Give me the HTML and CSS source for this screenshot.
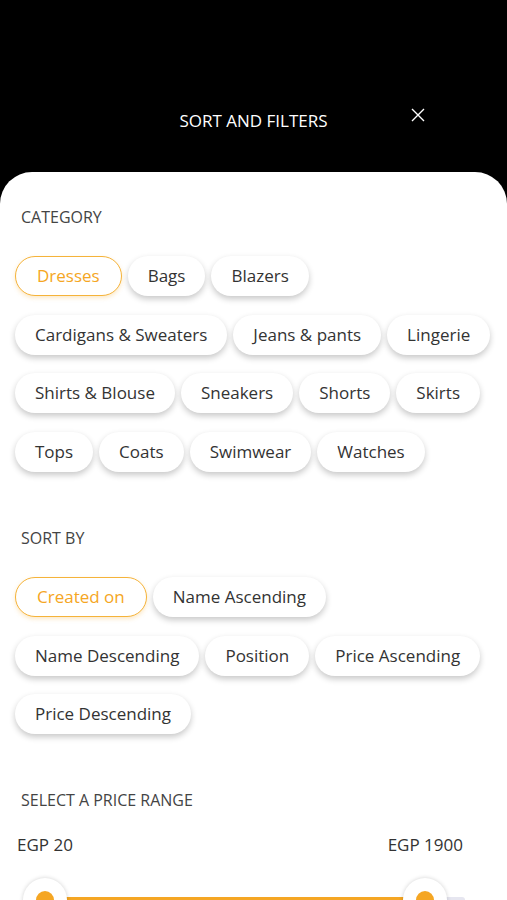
FILE: index.html
```html
<!DOCTYPE html>
<html>
<head>
    <title>Sort and Filters</title>
    <link rel="stylesheet" href="styles.css">
</head>
<body>
    <div class="topbar">
        <div class="title">SORT AND FILTERS</div>
        <svg class="close" width="14" height="14" viewBox="0 0 14 14">
            <path d="M1 1 L13 13 M13 1 L1 13" stroke="#fff" stroke-width="1.4" fill="none"/>
        </svg>
    </div>

    <div class="sheet">
        <h2 class="section-title">CATEGORY</h2>
        <div class="chips">
            <span class="chip active">Dresses</span>
            <span class="chip">Bags</span>
            <span class="chip">Blazers</span>
            <span class="chip">Cardigans &amp; Sweaters</span>
            <span class="chip">Jeans &amp; pants</span>
            <span class="chip">Lingerie</span>
            <span class="chip">Shirts &amp; Blouse</span>
            <span class="chip">Sneakers</span>
            <span class="chip">Shorts</span>
            <span class="chip">Skirts</span>
            <span class="chip">Tops</span>
            <span class="chip">Coats</span>
            <span class="chip">Swimwear</span>
            <span class="chip">Watches</span>
        </div>

        <h2 class="section-title sort-title">SORT BY</h2>
        <div class="chips">
            <span class="chip active">Created on</span>
            <span class="chip">Name Ascending</span>
            <span class="chip">Name Descending</span>
            <span class="chip">Position</span>
            <span class="chip">Price Ascending</span>
            <span class="chip">Price Descending</span>
        </div>

        <h2 class="section-title price-title">SELECT A PRICE RANGE</h2>
        <div class="price-labels">
            <span>EGP 20</span>
            <span>EGP 1900</span>
        </div>
        <div class="slider">
            <div class="track"></div>
            <div class="range"></div>
            <div class="thumb thumb-min"></div>
            <div class="thumb thumb-max"></div>
        </div>
    </div>
</body>
</html>
```

FILE: styles.css
```css
body {
  margin: 0;
  background: #000;
  font-family: "Open Sans", "Noto Sans", sans-serif;
  overflow: hidden;
  height: 900px;
}

.topbar {
  height: 172px;
  position: relative;
  display: flex;
  justify-content: center;
}

.title {
  color: #fff;
  font-size: 17px;
  margin-top: 108px;
  line-height: 26px;
}

.close {
  position: absolute;
  left: 411px;
  top: 108px;
}

.sheet {
  background: #fff;
  border-radius: 32px 32px 0 0;
  padding: 0 15px 0 15px;
  min-height: 728px;
}

.section-title {
  margin: 0;
  padding: 34px 0 0 6px;
  font-size: 16px;
  font-weight: normal;
  color: #444;
  line-height: 22px;
}

.sort-title {
  padding-top: 55px;
}

.price-title {
  padding-top: 55px;
}

.chips {
  display: flex;
  flex-wrap: wrap;
  column-gap: 6px;
  row-gap: 18.7px;
  margin-top: 28px;
}

.chip {
  height: 40px;
  line-height: 40px;
  padding: 0 20px;
  border-radius: 20px;
  background: #fff;
  color: #333;
  font-size: 17px;
  box-shadow: 0 3px 6px rgba(0, 0, 0, 0.22);
  box-sizing: border-box;
}

.chip.active {
  color: #f5a623;
  border: 1.5px solid #f5b33a;
  line-height: 37px;
  padding: 0 21px;
  box-shadow: 0 2px 4px rgba(245, 166, 35, 0.25);
}

.price-labels {
  display: flex;
  justify-content: space-between;
  padding: 0 29px 0 2px;
  margin-top: 22px;
  font-size: 17px;
  color: #333;
  line-height: 24px;
}

.slider {
  position: relative;
  height: 60px;
  margin-top: 19px;
}

.track {
  position: absolute;
  left: 30px;
  right: 27px;
  top: 21px;
  height: 6px;
  border-radius: 3px;
  background: #e6e6f0;
}

.range {
  position: absolute;
  left: 30px;
  width: 380px;
  top: 21px;
  height: 5px;
  background: #f5a623;
}

.thumb {
  position: absolute;
  top: 2px;
  width: 44px;
  height: 44px;
  margin-left: -22px;
  border-radius: 50%;
  background: #fff;
  box-shadow: 0 0 4px rgba(0, 0, 0, 0.18);
}

.thumb::after {
  content: "";
  position: absolute;
  left: 13px;
  top: 13px;
  width: 18px;
  height: 18px;
  border-radius: 50%;
  background: #f5a623;
}

.thumb-min {
  left: 30px;
}

.thumb-max {
  left: 410px;
}
```
